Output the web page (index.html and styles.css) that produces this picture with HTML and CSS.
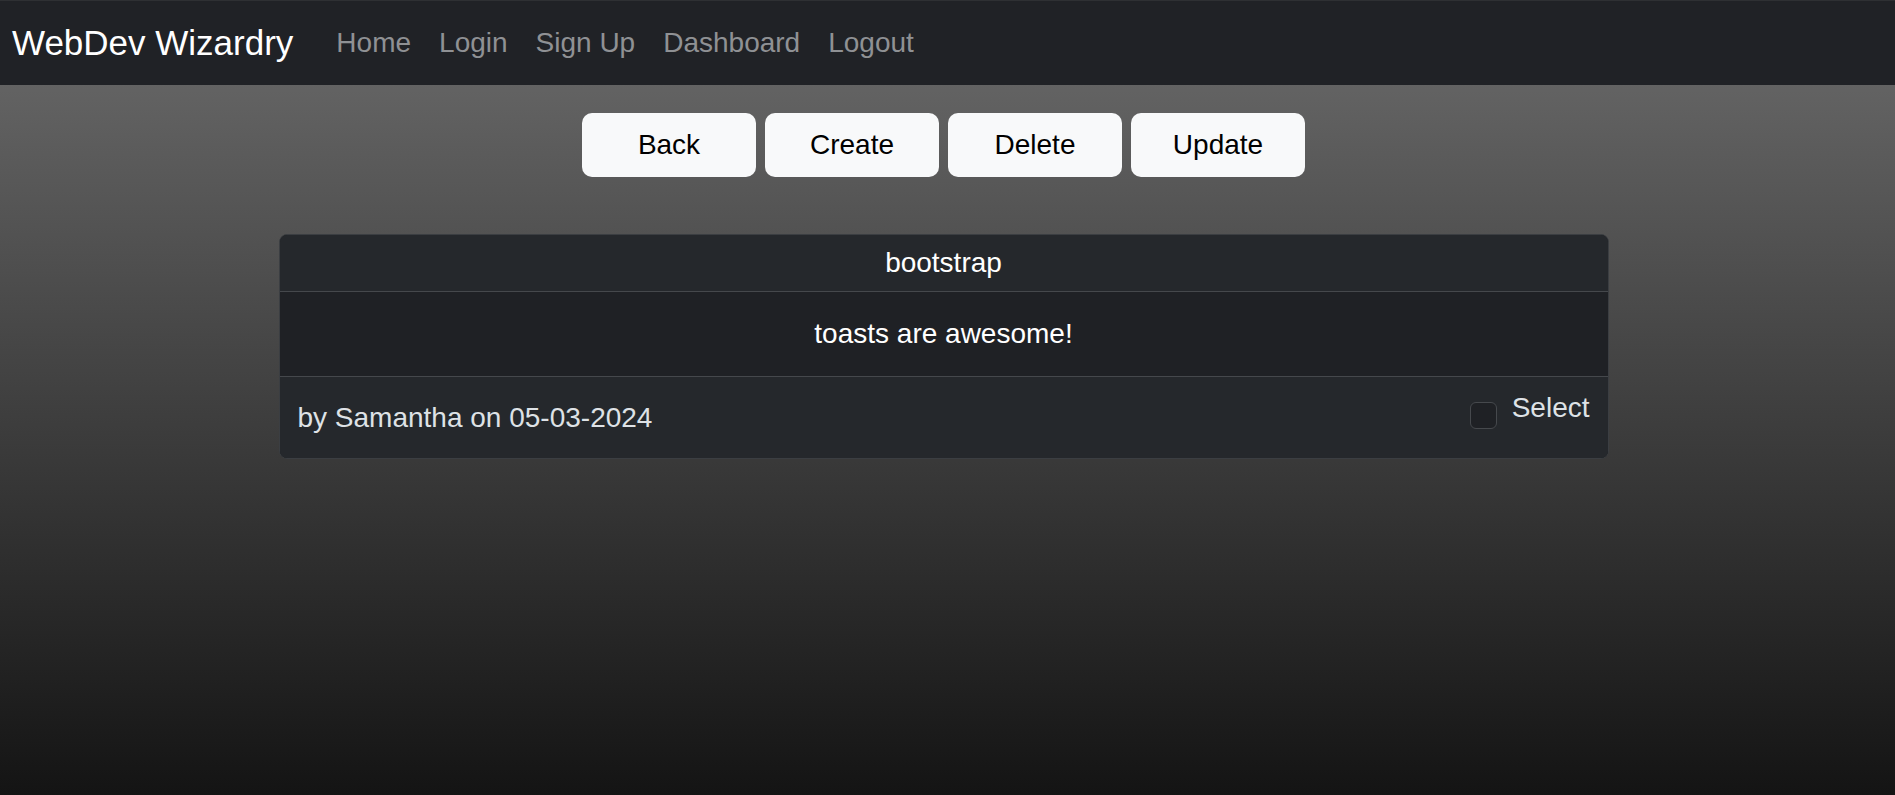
FILE: index.html
```html
<!DOCTYPE html>
<html lang="en">
<head>
<meta charset="utf-8">
<title>WebDev Wizardry</title>
<link rel="stylesheet" href="styles.css">
</head>
<body>
<nav class="navbar">
  <a class="brand" href="#">WebDev Wizardry</a>
  <ul class="nav-links">
    <li><a href="#">Home</a></li>
    <li><a href="#">Login</a></li>
    <li><a href="#">Sign Up</a></li>
    <li><a href="#">Dashboard</a></li>
    <li><a href="#">Logout</a></li>
  </ul>
</nav>
<main class="main">
  <div class="actions">
    <button class="btn">Back</button>
    <button class="btn">Create</button>
    <button class="btn">Delete</button>
    <button class="btn">Update</button>
  </div>
  <section class="card">
    <header class="card-header">bootstrap</header>
    <div class="card-body">toasts are awesome!</div>
    <footer class="card-footer">
      <span class="meta">by Samantha on 05-03-2024</span>
      <label class="select">
        <input type="checkbox" class="check">
        <span class="select-label">Select</span>
      </label>
    </footer>
  </section>
</main>
</body>
</html>
```
FILE: styles.css
```css
* { box-sizing: border-box; }

html, body {
  margin: 0;
  padding: 0;
}

body {
  min-height: 795px;
  font-family: "Liberation Sans", Arial, Helvetica, sans-serif;
  background: linear-gradient(to bottom, #6c6c6c 0px, #141414 795px);
  color: #dee2e6;
}

.navbar {
  height: 85px;
  border-top: 1px solid #2e3033;
  background: #202226;
  display: flex;
  align-items: center;
  padding-left: 12px;
}

.brand {
  font-size: 35px;
  color: #ffffff;
  text-decoration: none;
  margin-right: 29px;
}

.nav-links {
  list-style: none;
  margin: 0;
  padding: 0;
  display: flex;
}

.nav-links a {
  display: block;
  font-size: 28px;
  color: #8f9194;
  text-decoration: none;
  padding: 0 14px;
}

.main {
  padding-right: 8px;
}

.actions {
  margin-top: 28px;
  display: flex;
  justify-content: center;
  gap: 8.5px;
}

.btn {
  width: 174.5px;
  height: 64px;
  border: none;
  border-radius: 10px;
  background: #f8f9fa;
  color: #000000;
  font-family: "Liberation Sans", Arial, Helvetica, sans-serif;
  font-size: 28px;
  padding: 0;
}

.card {
  width: 1330px;
  margin: 57px auto 0;
  border: 1px solid #3b3e42;
  border-radius: 8px;
  overflow: hidden;
  background: #1f2125;
}

.card-header {
  height: 57px;
  line-height: 56px;
  border-bottom: 1px solid #45484c;
  background: #25282c;
  color: #ffffff;
  text-align: center;
  font-size: 28px;
}

.card-body {
  height: 85px;
  line-height: 84px;
  border-bottom: 1px solid #45484c;
  background: #1f2125;
  color: #ffffff;
  text-align: center;
  font-size: 28px;
}

.card-footer {
  height: 81px;
  background: #25282c;
  display: flex;
  align-items: center;
  justify-content: space-between;
  padding: 0 18px 0 18px;
  font-size: 28px;
  line-height: 1.2;
}

.meta {
  color: #dee2e6;
}

.select {
  align-self: flex-start;
  margin-top: 14px;
  display: flex;
  align-items: flex-start;
  gap: 14.6px;
}

.check {
  appearance: none;
  -webkit-appearance: none;
  margin: 10.7px 0 0 0;
  width: 27.5px;
  height: 27.5px;
  border: 1px solid #46494d;
  border-radius: 6px;
  background: #1f2125;
}

.select-label {
  color: #dee2e6;
}
```
